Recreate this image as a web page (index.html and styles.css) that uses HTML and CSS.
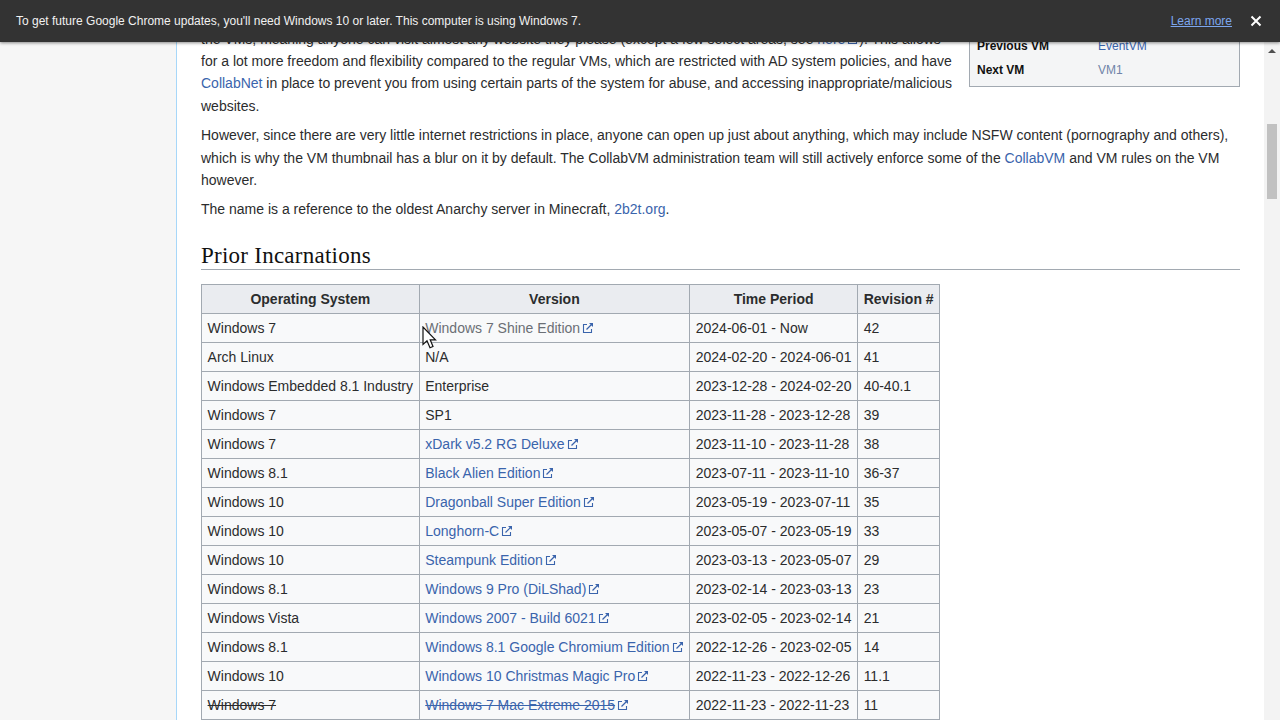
FILE: index.html
```html
<!DOCTYPE html>
<html lang="en">
<head>
<meta charset="utf-8">
<title>Prior Incarnations</title>
<link rel="stylesheet" href="styles.css">
</head>
<body>
<svg class="defs" width="0" height="0" aria-hidden="true">
  <symbol id="ext" viewBox="0 0 12 12">
    <path d="M5 2.5H1.5V10.5H9.5V7" fill="none" stroke="currentColor" stroke-width="1.1"/>
    <path d="M4.5 7.5L10 2" fill="none" stroke="currentColor" stroke-width="1.2"/>
    <path d="M7 1H11V5Z" fill="currentColor"/>
  </symbol>
</svg>
<div class="banner">
  <span class="banner-text">To get future Google Chrome updates, you'll need Windows 10 or later. This computer is using Windows 7.</span>
  <a class="banner-link" href="#">Learn more</a>
  <svg class="banner-close" width="12" height="12" viewBox="0 0 12 12"><path d="M1.5 1.5L10.5 10.5M10.5 1.5L1.5 10.5" stroke="#fff" stroke-width="2"/></svg>
</div>
<div class="page">
  <aside class="sidebar"></aside>
  <main class="content">
    <div class="infobox">
      <div class="info-row"><b class="info-key">Previous VM</b><a href="#">EventVM</a></div>
      <div class="info-row"><b class="info-key">Next VM</b><a class="dim" href="#">VM1</a></div>
    </div>
    <p class="lead">the VMs, meaning anyone can visit almost any website they please (except a few select areas, see <a href="#">here<svg class="ext"><use href="#ext"/></svg></a>). This allows for a lot more freedom and flexibility compared to the regular VMs, which are restricted with AD system policies, and have <a href="#">CollabNet</a> in place to prevent you from using certain parts of the system for abuse, and accessing inappropriate/malicious websites.</p>
    <p>However, since there are very little internet restrictions in place, anyone can open up just about anything, which may include NSFW content (pornography and others), which is why the VM thumbnail has a blur on it by default. The CollabVM administration team will still actively enforce some of the <a href="#">CollabVM</a> and VM rules on the VM however.</p>
    <p>The name is a reference to the oldest Anarchy server in Minecraft, <a href="#">2b2t.org</a>.</p>
    <h2>Prior Incarnations</h2>
    <table class="wikitable">
      <thead>
        <tr><th>Operating System</th><th>Version</th><th>Time Period</th><th>Revision #</th></tr>
      </thead>
      <tbody>
        <tr><td>Windows 7</td><td><a class="muted" href="#">Windows 7 Shine Edition<svg class="ext"><use href="#ext"/></svg></a></td><td>2024-06-01 - Now</td><td>42</td></tr>
        <tr><td>Arch Linux</td><td>N/A</td><td>2024-02-20 - 2024-06-01</td><td>41</td></tr>
        <tr><td>Windows Embedded 8.1 Industry</td><td>Enterprise</td><td>2023-12-28 - 2024-02-20</td><td>40-40.1</td></tr>
        <tr><td>Windows 7</td><td>SP1</td><td>2023-11-28 - 2023-12-28</td><td>39</td></tr>
        <tr><td>Windows 7</td><td><a href="#">xDark v5.2 RG Deluxe<svg class="ext"><use href="#ext"/></svg></a></td><td>2023-11-10 - 2023-11-28</td><td>38</td></tr>
        <tr><td>Windows 8.1</td><td><a href="#">Black Alien Edition<svg class="ext"><use href="#ext"/></svg></a></td><td>2023-07-11 - 2023-11-10</td><td>36-37</td></tr>
        <tr><td>Windows 10</td><td><a href="#">Dragonball Super Edition<svg class="ext"><use href="#ext"/></svg></a></td><td>2023-05-19 - 2023-07-11</td><td>35</td></tr>
        <tr><td>Windows 10</td><td><a href="#">Longhorn-C<svg class="ext"><use href="#ext"/></svg></a></td><td>2023-05-07 - 2023-05-19</td><td>33</td></tr>
        <tr><td>Windows 10</td><td><a href="#">Steampunk Edition<svg class="ext"><use href="#ext"/></svg></a></td><td>2023-03-13 - 2023-05-07</td><td>29</td></tr>
        <tr><td>Windows 8.1</td><td><a href="#">Windows 9 Pro (DiLShad)<svg class="ext"><use href="#ext"/></svg></a></td><td>2023-02-14 - 2023-03-13</td><td>23</td></tr>
        <tr><td>Windows Vista</td><td><a href="#">Windows 2007 - Build 6021<svg class="ext"><use href="#ext"/></svg></a></td><td>2023-02-05 - 2023-02-14</td><td>21</td></tr>
        <tr><td>Windows 8.1</td><td><a href="#">Windows 8.1 Google Chromium Edition<svg class="ext"><use href="#ext"/></svg></a></td><td>2022-12-26 - 2023-02-05</td><td>14</td></tr>
        <tr><td>Windows 10</td><td><a href="#">Windows 10 Christmas Magic Pro<svg class="ext"><use href="#ext"/></svg></a></td><td>2022-11-23 - 2022-12-26</td><td>11.1</td></tr>
        <tr><td><s>Windows 7</s></td><td><a href="#"><s>Windows 7 Mac Extreme 2015</s><svg class="ext"><use href="#ext"/></svg></a></td><td>2022-11-23 - 2022-11-23</td><td>11</td></tr>
      </tbody>
    </table>
  </main>
  <div class="scrollbar">
    <div class="scroll-arrow"></div>
    <div class="scroll-thumb"></div>
  </div>
</div>
<svg class="cursor" width="15" height="24" viewBox="0 0 15 24"><path d="M1 1V18.5L5 14.8L8 21.8L11 20.5L8.2 13.8H13.5Z" fill="#fff" stroke="#111" stroke-width="1.2"/></svg>
</body>
</html>
```
FILE: styles.css
```css
* { box-sizing: border-box; }
html, body { margin: 0; height: 720px; overflow: hidden; }
body {
  position: relative;
  font-family: "Liberation Sans", Arial, sans-serif;
  font-size: 14px;
  line-height: 22.4px;
  color: #2b2c2d;
  background: #f6f6f6;
}
a { color: #3a64ac; text-decoration: none; }
a.muted { color: #6b6f75; }
a.dim { color: #6f84a8; }
.defs { position: absolute; }

.banner {
  position: absolute;
  top: 0;
  left: 0;
  right: 0;
  z-index: 5;
  height: 42px;
  display: flex;
  align-items: center;
  padding: 0 18px 0 16px;
  background: #333333;
  color: #f1f1f1;
  font-size: 12px;
  box-shadow: 0 1px 3px rgba(0, 0, 0, 0.45);
}
.banner-text { flex: 1; }
.banner-link { color: #7ca6ee; text-decoration: underline; margin-right: 18px; }
.banner-close { display: block; }

.page { display: flex; height: 720px; }
.sidebar { width: 176px; flex: none; }
.content {
  flex: 1;
  min-width: 0;
  padding: 27.6px 23px 0 24px;
  background: #fff;
  border-left: 1px solid #a7d7f9;
}
.scrollbar {
  width: 17px;
  flex: none;
  padding: 49px 3px 0;
  background: #f3f3f3;
  border-left: 1px solid #fff;
}
.scroll-arrow {
  width: 0;
  height: 0;
  margin: 0 auto;
  border-left: 4px solid transparent;
  border-right: 4px solid transparent;
  border-bottom: 4px solid #505050;
}
.scroll-thumb {
  height: 75px;
  margin-top: 71px;
  background: #c1c1c1;
}

p { margin: 0 0 6.8px; }
p.lead { margin-bottom: 7.1px; }
h2 {
  margin: 21px 0 0;
  font-family: "Liberation Serif", Georgia, serif;
  font-size: 23px;
  letter-spacing: 0.25px;
  font-weight: 400;
  line-height: 27.3px;
  color: #111;
  border-bottom: 1px solid #a2a9b1;
  overflow: hidden;
}

.infobox {
  float: right;
  width: 271px;
  margin-left: 17px;
  padding: 5px 7px 4px;
  background: #f4f5f6;
  border: 1px solid #a2a9b1;
  font-size: 12px;
  line-height: 24px;
}
.info-row { display: flex; }
.info-key { width: 121px; color: #111; }

.wikitable {
  margin-top: 14px;
  border-collapse: collapse;
  background: #f8f9fa;
}
.wikitable th, .wikitable td {
  border: 1px solid #a2a9b1;
  padding: 3.1px 5.6px 2.5px;
  white-space: nowrap;
}
.wikitable th { background: #eaecf0; text-align: center; font-weight: 700; }
.ext { width: 12px; height: 12px; margin-left: 2px; vertical-align: -1px; color: #3a64ac; }

.cursor { position: absolute; left: 422px; top: 326px; z-index: 4; }
```
